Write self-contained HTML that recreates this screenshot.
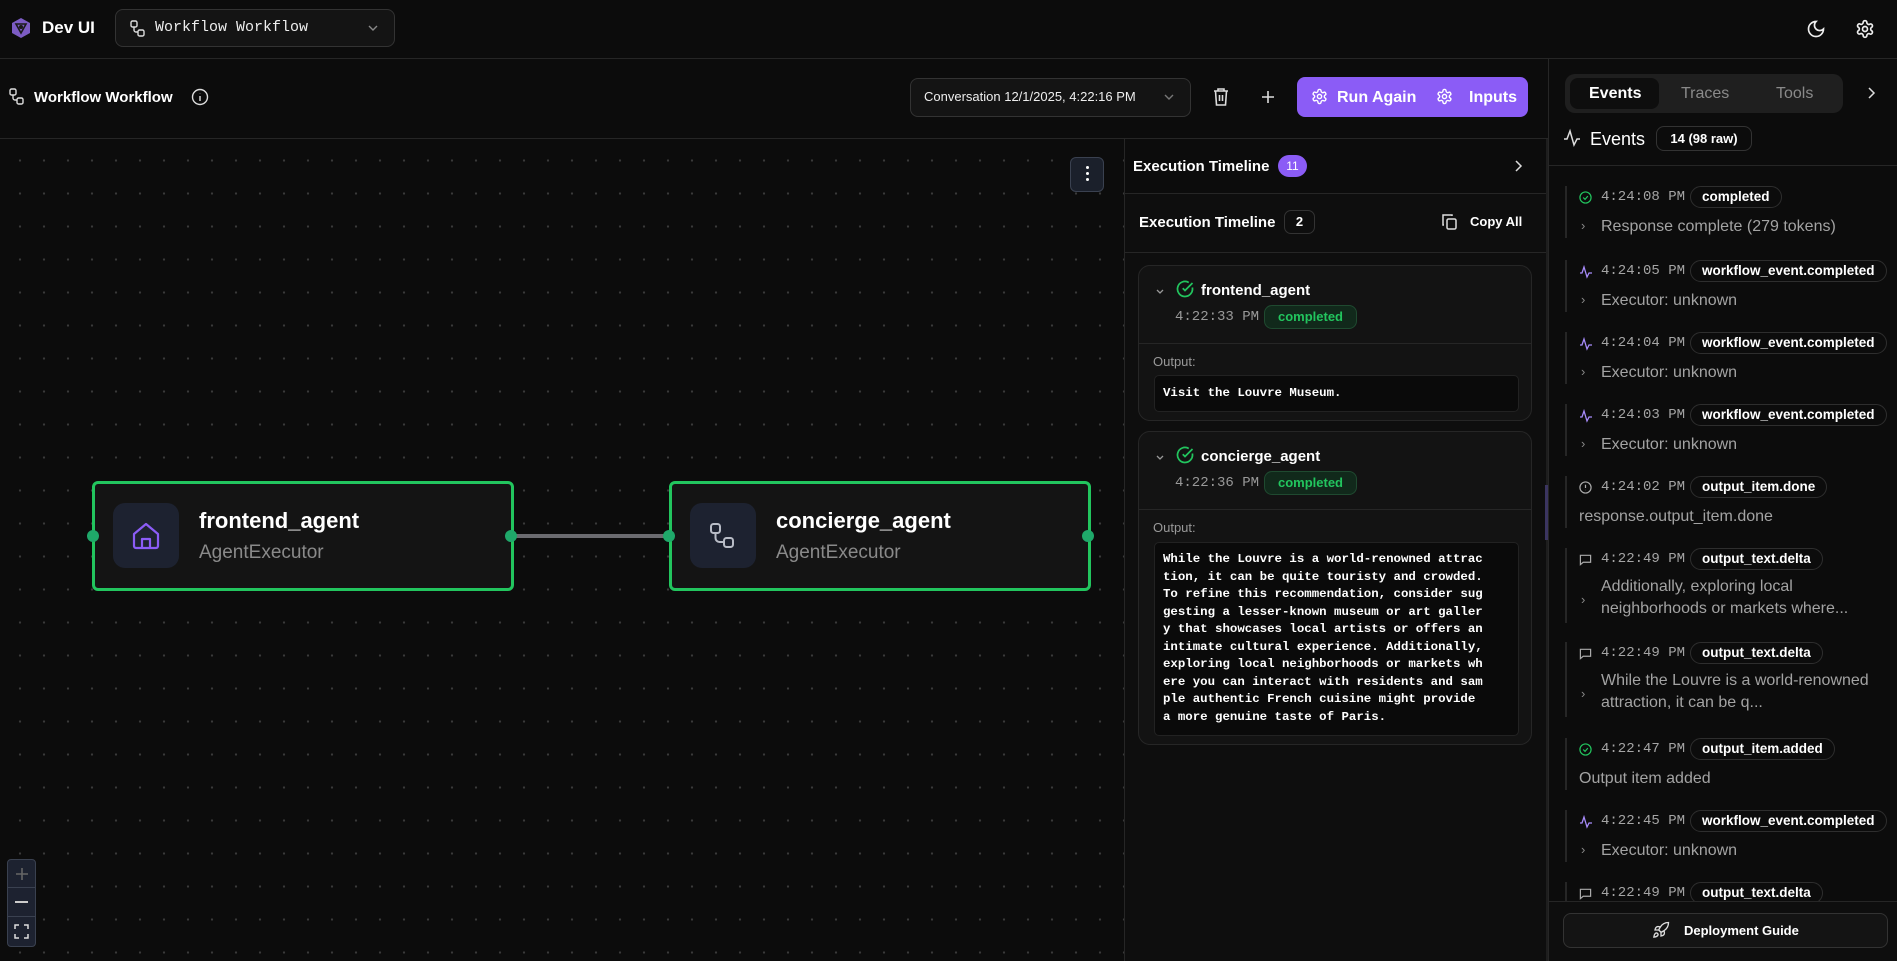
<!DOCTYPE html>
<html><head><meta charset="utf-8">
<style>
*{box-sizing:border-box;margin:0;padding:0}
body{width:1897px;height:961px;background:#0c0c0c;color:#fff;font-family:"Liberation Sans",sans-serif;position:relative;overflow:hidden}
.a{position:absolute}
.mono{font-family:"Liberation Mono",monospace}
svg{display:block}
.ev{position:absolute;left:1565px;width:320px;border-left:2px solid #262626}
.ev .row{position:absolute;left:0;top:0;height:24px;width:320px}
.ev .ic{position:absolute;left:12px;top:5px}
.ev .t{position:absolute;left:34px;top:3px;font-family:"Liberation Mono",monospace;font-size:14px;color:#a5a5a5}
.ev .b{position:absolute;left:123px;top:0;height:22px;border:1px solid #2e2e2e;border-radius:11px;padding:0 11px;font-size:13.5px;font-weight:bold;line-height:20px;color:#fff;white-space:nowrap}
.ev .d{position:absolute;left:34px;top:28px;font-size:16px;color:#a3a3a3;line-height:26px;white-space:nowrap}
.ev .d0{left:12px}
.ev .ch{position:absolute;left:14px;top:32px;color:#888;font-size:13px}
.card{position:absolute;left:1138px;width:394px;border:1px solid #262626;border-radius:12px;background:#131313;overflow:hidden}
</style></head><body>
<div class="a" style="left:0;top:139px;width:1124px;height:822px;background-image:radial-gradient(circle,#3a3a3a 1px,transparent 1.3px);background-size:24px 33px;background-position:8px 5px"></div>

<div class="a" style="left:0;top:0;width:1897px;height:59px;border-bottom:1px solid #262626;background:#0c0c0c"></div>
<svg class="a" style="left:11px;top:17px" width="20" height="22" viewBox="0 0 20 22"><path d="M10 1L19 6V16L10 21L1 16V6Z" fill="#7c5cc4"/><path d="M5 7H15L10 16Z" fill="none" stroke="#1a1a1a" stroke-width="1.6"/><circle cx="10" cy="10" r="2" fill="#1a1a1a"/></svg>
<div class="a" style="left:42px;top:18px;font-size:17px;font-weight:bold">Dev UI</div>
<div class="a" style="left:115px;top:9px;width:280px;height:38px;border:1px solid #333;border-radius:8px;background:#141414"></div>
<svg class="a" style="left:130px;top:20px" width="16" height="18" viewBox="0 0 16 18" fill="none" stroke="#ddd" stroke-width="1.4"><rect x="1" y="1" width="6" height="6" rx="1.5"/><rect x="8" y="10" width="6" height="6" rx="1.5"/><path d="M4 7v3a2 2 0 0 0 2 2h2"/></svg>
<div class="a mono" style="left:155px;top:19px;font-size:15px;color:#eee">Workflow Workflow</div>
<svg class="a" style="left:367px;top:24px" width="12" height="8" viewBox="0 0 12 8"><path d="M2 2l4 4 4-4" stroke="#888" stroke-width="1.4" fill="none"/></svg>
<svg class="a" style="left:1806px;top:19px" width="20" height="20" viewBox="0 0 24 24" fill="none" stroke="#eee" stroke-width="2"><path d="M12 3a6 6 0 0 0 9 9 9 9 0 1 1-9-9z"/></svg>
<svg class="a" style="left:1855px;top:19px" width="20" height="20" viewBox="0 0 24 24" fill="none" stroke="#eee" stroke-width="2"><path d="M12.2 2h-.4a2 2 0 0 0-2 2v.2a2 2 0 0 1-1 1.7l-.4.3a2 2 0 0 1-2 0l-.2-.1a2 2 0 0 0-2.7.7l-.2.4a2 2 0 0 0 .7 2.7l.2.1a2 2 0 0 1 1 1.700v.5a2 2 0 0 1-1 1.7l-.2.1a2 2 0 0 0-.7 2.7l.2.4a2 2 0 0 0 2.7.7l.2-.1a2 2 0 0 1 2 0l.4.3a2 2 0 0 1 1 1.7V20a2 2 0 0 0 2 2h.4a2 2 0 0 0 2-2v-.2a2 2 0 0 1 1-1.7l.4-.3a2 2 0 0 1 2 0l.2.1a2 2 0 0 0 2.7-.7l.2-.4a2 2 0 0 0-.7-2.7l-.2-.1a2 2 0 0 1-1-1.7v-.5a2 2 0 0 1 1-1.7l.2-.1a2 2 0 0 0 .7-2.7l-.2-.4a2 2 0 0 0-2.7-.7l-.2.1a2 2 0 0 1-2 0l-.4-.3a2 2 0 0 1-1-1.7V4a2 2 0 0 0-2-2z"/><circle cx="12" cy="12" r="3"/></svg>

<div class="a" style="left:0;top:59px;width:1548px;height:80px;border-bottom:1px solid #262626"></div>
<svg class="a" style="left:9px;top:88px" width="16" height="18" viewBox="0 0 16 18" fill="none" stroke="#ddd" stroke-width="1.4"><rect x="1" y="1" width="6" height="6" rx="1.5"/><rect x="8" y="10" width="6" height="6" rx="1.5"/><path d="M4 7v3a2 2 0 0 0 2 2h2"/></svg>
<div class="a" style="left:34px;top:89px;font-size:15px;font-weight:bold">Workflow Workflow</div>
<svg class="a" style="left:191px;top:88px" width="18" height="18" viewBox="0 0 18 18" fill="none" stroke="#ddd" stroke-width="1.4"><circle cx="9" cy="9" r="7.5"/><path d="M9 8v5M9 5.2v.3"/></svg>
<div class="a" style="left:910px;top:78px;width:281px;height:39px;border:1px solid #333;border-radius:8px;background:#141414"></div>
<div class="a" style="left:924px;top:89px;font-size:13px;color:#eee">Conversation 12/1/2025, 4:22:16 PM</div>
<svg class="a" style="left:1163px;top:93px" width="12" height="8" viewBox="0 0 12 8"><path d="M2 2l4 4 4-4" stroke="#777" stroke-width="1.4" fill="none"/></svg>
<svg class="a" style="left:1212px;top:87px" width="18" height="20" viewBox="0 0 18 20" fill="none" stroke="#ddd" stroke-width="1.6"><path d="M2 4h14M6 4V2h6v2M3.5 4l1 14h9l1-14M7.5 8v6M10.5 8v6"/></svg>
<svg class="a" style="left:1260px;top:89px" width="16" height="16" viewBox="0 0 16 16" stroke="#ddd" stroke-width="1.6"><path d="M8 2v12M2 8h12"/></svg>
<div class="a" style="left:1297px;top:77px;width:231px;height:40px;border-radius:8px;background:#8b5cf6"></div>
<svg class="a" style="left:1311px;top:88px" width="17" height="17" viewBox="0 0 24 24" fill="none" stroke="#fff" stroke-width="2"><path d="M12.2 2h-.4a2 2 0 0 0-2 2v.2a2 2 0 0 1-1 1.7l-.4.3a2 2 0 0 1-2 0l-.2-.1a2 2 0 0 0-2.7.7l-.2.4a2 2 0 0 0 .7 2.7l.2.1a2 2 0 0 1 1 1.7v.5a2 2 0 0 1-1 1.7l-.2.1a2 2 0 0 0-.7 2.7l.2.4a2 2 0 0 0 2.7.7l.2-.1a2 2 0 0 1 2 0l.4.3a2 2 0 0 1 1 1.7V20a2 2 0 0 0 2 2h.4a2 2 0 0 0 2-2v-.2a2 2 0 0 1 1-1.7l.4-.3a2 2 0 0 1 2 0l.2.1a2 2 0 0 0 2.7-.7l.2-.4a2 2 0 0 0-.7-2.7l-.2-.1a2 2 0 0 1-1-1.7v-.5a2 2 0 0 1 1-1.7l.2-.1a2 2 0 0 0 .7-2.7l-.2-.4a2 2 0 0 0-2.7-.7l-.2.1a2 2 0 0 1-2 0l-.4-.3a2 2 0 0 1-1-1.7V4a2 2 0 0 0-2-2z"/><circle cx="12" cy="12" r="3"/></svg>
<div class="a" style="left:1337px;top:89px;font-size:16px;font-weight:bold">Run Again</div>
<svg class="a" style="left:1436px;top:88px" width="17" height="17" viewBox="0 0 24 24" fill="none" stroke="#fff" stroke-width="2"><path d="M12.2 2h-.4a2 2 0 0 0-2 2v.2a2 2 0 0 1-1 1.7l-.4.3a2 2 0 0 1-2 0l-.2-.1a2 2 0 0 0-2.7.7l-.2.4a2 2 0 0 0 .7 2.7l.2.1a2 2 0 0 1 1 1.7v.5a2 2 0 0 1-1 1.7l-.2.1a2 2 0 0 0-.7 2.7l.2.4a2 2 0 0 0 2.7.7l.2-.1a2 2 0 0 1 2 0l.4.3a2 2 0 0 1 1 1.7V20a2 2 0 0 0 2 2h.4a2 2 0 0 0 2-2v-.2a2 2 0 0 1 1-1.7l.4-.3a2 2 0 0 1 2 0l.2.1a2 2 0 0 0 2.7-.7l.2-.4a2 2 0 0 0-.7-2.7l-.2-.1a2 2 0 0 1-1-1.7v-.5a2 2 0 0 1 1-1.7l.2-.1a2 2 0 0 0 .7-2.7l-.2-.4a2 2 0 0 0-2.7-.7l-.2.1a2 2 0 0 1-2 0l-.4-.3a2 2 0 0 1-1-1.7V4a2 2 0 0 0-2-2z"/><circle cx="12" cy="12" r="3"/></svg>
<div class="a" style="left:1469px;top:89px;font-size:16px;font-weight:bold">Inputs</div>

<div class="a" style="left:1070px;top:157px;width:34px;height:35px;border:1px solid #3a4150;border-radius:6px;background:#1b202b"></div>
<div class="a" style="left:1086px;top:166px;width:3px;height:3px;background:#fff;border-radius:2px;box-shadow:0 6px 0 #fff,0 12px 0 #fff"></div>
<div class="a" style="left:513px;top:534px;width:156px;height:4px;background:#6b6b70"></div>
<div class="a" style="left:92px;top:481px;width:422px;height:110px;border:3px solid #22c55e;border-radius:6px;background:#141414"></div>
<div class="a" style="left:113px;top:503px;width:66px;height:65px;border-radius:12px;background:#1d2230"></div>
<svg class="a" style="left:131px;top:521px" width="30" height="30" viewBox="0 0 30 30" fill="none" stroke="#8b5cf6" stroke-width="2.2" stroke-linejoin="round"><path d="M3 13L15 3l12 10v12a2 2 0 0 1-2 2H5a2 2 0 0 1-2-2z"/><path d="M11 27v-9h8v9"/></svg>
<div class="a" style="left:199px;top:508px;font-size:22px;font-weight:bold">frontend_agent</div>
<div class="a" style="left:199px;top:542px;font-size:19px;color:#8a8a8a">AgentExecutor</div>
<div class="a" style="left:669px;top:481px;width:422px;height:110px;border:3px solid #22c55e;border-radius:6px;background:#141414"></div>
<div class="a" style="left:690px;top:503px;width:66px;height:65px;border-radius:12px;background:#1d2230"></div>
<svg class="a" style="left:708px;top:521px" width="30" height="30" viewBox="0 0 30 30" fill="none" stroke="#b8bcc6" stroke-width="2"><rect x="3" y="3" width="9" height="9" rx="2.5"/><rect x="16" y="17" width="9" height="9" rx="2.5"/><path d="M7.5 12v5a4 4 0 0 0 4 4H16"/></svg>
<div class="a" style="left:776px;top:508px;font-size:22px;font-weight:bold">concierge_agent</div>
<div class="a" style="left:776px;top:542px;font-size:19px;color:#8a8a8a">AgentExecutor</div>
<div class="a" style="left:87px;top:530px;width:12px;height:12px;border-radius:6px;background:#1fa86a"></div>
<div class="a" style="left:505px;top:530px;width:12px;height:12px;border-radius:6px;background:#1fa86a"></div>
<div class="a" style="left:663px;top:530px;width:12px;height:12px;border-radius:6px;background:#1fa86a"></div>
<div class="a" style="left:1082px;top:530px;width:12px;height:12px;border-radius:6px;background:#1fa86a"></div>
<div class="a" style="left:7px;top:859px;width:29px;height:88px;border:1px solid #3a4150;border-radius:4px;background:#1d2230"></div>
<div class="a" style="left:8px;top:887px;width:27px;height:1px;background:#3a4150"></div>
<div class="a" style="left:8px;top:916px;width:27px;height:1px;background:#3a4150"></div>
<svg class="a" style="left:14px;top:866px" width="16" height="16" stroke="#666" stroke-width="1.6"><path d="M8 2v12M2 8h12"/></svg>
<div class="a" style="left:15px;top:901px;width:13px;height:2px;background:#ccc"></div>
<svg class="a" style="left:14px;top:924px" width="15" height="15" fill="none" stroke="#ddd" stroke-width="1.5"><path d="M1 5V1h4M10 1h4v4M14 10v4h-4M5 14H1v-4"/></svg>

<div class="a" style="left:1124px;top:139px;width:424px;height:822px;border-left:1px solid #262626;border-right:2px solid #1e1e1e;background:#0c0c0c"></div>
<div class="a" style="left:1133px;top:158px;font-size:15px;font-weight:bold">Execution Timeline</div>
<div class="a" style="left:1278px;top:155px;width:29px;height:22px;border-radius:11px;background:#8b5cf6;font-size:12px;text-align:center;line-height:22px">11</div>
<svg class="a" style="left:1514px;top:159px" width="10" height="14"><path d="M2 2l5 5-5 5" stroke="#ddd" stroke-width="1.5" fill="none"/></svg>
<div class="a" style="left:1125px;top:193px;width:421px;height:768px;border-top:1px solid #262626;background:#0e0e0e"></div>
<div class="a" style="left:1125px;top:252px;width:421px;height:1px;background:#262626"></div>
<div class="a" style="left:1139px;top:214px;font-size:15px;font-weight:bold">Execution Timeline</div>
<div class="a" style="left:1284px;top:210px;width:31px;height:24px;border:1px solid #333;border-radius:7px;font-size:13px;font-weight:bold;text-align:center;line-height:22px">2</div>
<svg class="a" style="left:1441px;top:213px" width="17" height="18" viewBox="0 0 17 18" fill="none" stroke="#ddd" stroke-width="1.5"><rect x="6" y="6" width="9" height="10" rx="1.5"/><path d="M3 12H2V2h9v1"/></svg>
<div class="a" style="left:1470px;top:214px;font-size:13px;font-weight:bold">Copy All</div>
<div class="a" style="left:1545px;top:485px;width:3px;height:55px;background:#3b3560"></div>

<div class="card" style="top:265px;height:156px">
  <svg class="a" style="left:16px;top:22px" width="10" height="8"><path d="M2 2l3 3 3-3" stroke="#999" stroke-width="1.3" fill="none"/></svg>
  <svg class="a" style="left:37px;top:14px" width="18" height="18" viewBox="0 0 24 24" fill="none" stroke="#22c55e" stroke-width="2.3"><path d="M21.8 10A10 10 0 1 1 17 3.3"/><path d="M9 11l3 3L22 4"/></svg>
  <div class="a" style="left:62px;top:16px;font-size:15px;font-weight:bold">frontend_agent</div>
  <div class="a mono" style="left:36px;top:43px;font-size:14px;color:#999">4:22:33 PM</div>
  <div class="a" style="left:125px;top:39px;width:93px;height:24px;border:1px solid #1f4a30;border-radius:8px;background:#11291b;color:#22c55e;font-size:13px;font-weight:bold;text-align:center;line-height:22px">completed</div>
  <div class="a" style="left:0;top:77px;width:394px;height:1px;background:#262626"></div>
  <div class="a" style="left:14px;top:88px;font-size:13px;color:#999">Output:</div>
  <div class="a mono" style="left:15px;top:109px;width:365px;height:37px;border:1px solid #222;border-radius:5px;background:#0a0a0a;font-size:12.4px;font-weight:bold;padding:10px 8px;color:#fff">Visit the Louvre Museum.</div>
</div>
<div class="card" style="top:431px;height:314px">
  <svg class="a" style="left:16px;top:22px" width="10" height="8"><path d="M2 2l3 3 3-3" stroke="#999" stroke-width="1.3" fill="none"/></svg>
  <svg class="a" style="left:37px;top:14px" width="18" height="18" viewBox="0 0 24 24" fill="none" stroke="#22c55e" stroke-width="2.3"><path d="M21.8 10A10 10 0 1 1 17 3.3"/><path d="M9 11l3 3L22 4"/></svg>
  <div class="a" style="left:62px;top:16px;font-size:15px;font-weight:bold">concierge_agent</div>
  <div class="a mono" style="left:36px;top:43px;font-size:14px;color:#999">4:22:36 PM</div>
  <div class="a" style="left:125px;top:39px;width:93px;height:24px;border:1px solid #1f4a30;border-radius:8px;background:#11291b;color:#22c55e;font-size:13px;font-weight:bold;text-align:center;line-height:22px">completed</div>
  <div class="a" style="left:0;top:77px;width:394px;height:1px;background:#262626"></div>
  <div class="a" style="left:14px;top:88px;font-size:13px;color:#999">Output:</div>
  <div class="a mono" style="left:15px;top:110px;width:365px;height:194px;border:1px solid #222;border-radius:5px;background:#0a0a0a;font-size:12.4px;font-weight:bold;line-height:17.5px;padding:8px 8px;color:#fff;white-space:pre">While the Louvre is a world-renowned attrac
tion, it can be quite touristy and crowded.
To refine this recommendation, consider sug
gesting a lesser-known museum or art galler
y that showcases local artists or offers an
intimate cultural experience. Additionally,
exploring local neighborhoods or markets wh
ere you can interact with residents and sam
ple authentic French cuisine might provide
a more genuine taste of Paris.</div>
</div>

<div class="a" style="left:1548px;top:59px;width:349px;height:902px;border-left:1px solid #262626;background:#0c0c0c"></div>
<div class="a" style="left:1565px;top:74px;width:278px;height:39px;border-radius:10px;background:#1f1f1f"></div>
<div class="a" style="left:1570px;top:78px;width:89px;height:31px;border-radius:8px;background:#0e0e0e"></div>
<div class="a" style="left:1589px;top:85px;font-size:16px;font-weight:bold">Events</div>
<div class="a" style="left:1681px;top:85px;font-size:16px;color:#8a8a8a">Traces</div>
<div class="a" style="left:1776px;top:85px;font-size:16px;color:#8a8a8a">Tools</div>
<svg class="a" style="left:1867px;top:86px" width="10" height="14"><path d="M2 2l5 5-5 5" stroke="#ddd" stroke-width="1.5" fill="none"/></svg>
<svg class="a" style="left:1563px;top:128px" width="18" height="20" viewBox="0 0 18 20" fill="none" stroke="#ddd" stroke-width="1.5"><path d="M1 11h3l3-8 4 14 3-6h3"/></svg>
<div class="a" style="left:1590px;top:129px;font-size:18px">Events</div>
<div class="a" style="left:1656px;top:126px;width:96px;height:25px;border:1px solid #333;border-radius:8px;font-size:13px;font-weight:bold;text-align:center;line-height:23px">14 (98 raw)</div>
<div class="a" style="left:1548px;top:165px;width:349px;height:1px;background:#262626"></div>

<div class="ev" style="top:186px;height:52px"><div class="row"><svg class="ic" width="13" height="13" viewBox="0 0 14 14" fill="none" stroke="#22c55e" stroke-width="1.3"><circle cx="7" cy="7" r="6"/><path d="M4.5 7l2 2 3-3.5"/></svg><span class="t">4:24:08 PM</span><span class="b">completed</span></div><span class="ch">›</span><div class="d">Response complete (279 tokens)</div></div>
<div class="ev" style="top:260px;height:52px"><div class="row"><svg class="ic" width="14" height="14" viewBox="0 0 14 14" fill="none" stroke="#a78bfa" stroke-width="1.3"><path d="M1 8h2l2-6 3 10 2-4h3"/></svg><span class="t">4:24:05 PM</span><span class="b">workflow_event.completed</span></div><span class="ch">›</span><div class="d">Executor: unknown</div></div>
<div class="ev" style="top:332px;height:52px"><div class="row"><svg class="ic" width="14" height="14" viewBox="0 0 14 14" fill="none" stroke="#a78bfa" stroke-width="1.3"><path d="M1 8h2l2-6 3 10 2-4h3"/></svg><span class="t">4:24:04 PM</span><span class="b">workflow_event.completed</span></div><span class="ch">›</span><div class="d">Executor: unknown</div></div>
<div class="ev" style="top:404px;height:52px"><div class="row"><svg class="ic" width="14" height="14" viewBox="0 0 14 14" fill="none" stroke="#a78bfa" stroke-width="1.3"><path d="M1 8h2l2-6 3 10 2-4h3"/></svg><span class="t">4:24:03 PM</span><span class="b">workflow_event.completed</span></div><span class="ch">›</span><div class="d">Executor: unknown</div></div>
<div class="ev" style="top:476px;height:52px"><div class="row"><svg class="ic" width="13" height="13" viewBox="0 0 14 14" fill="none" stroke="#aaa" stroke-width="1.3"><circle cx="7" cy="7" r="6"/><path d="M7 4v3.5M7 9.5v.3"/></svg><span class="t">4:24:02 PM</span><span class="b">output_item.done</span></div><div class="d d0">response.output_item.done</div></div>
<div class="ev" style="top:548px;height:75px"><div class="row"><svg class="ic" width="13" height="13" viewBox="0 0 14 14" fill="none" stroke="#aaa" stroke-width="1.3"><path d="M1.5 2.5h11v7.5h-8l-3 2.5z"/></svg><span class="t">4:22:49 PM</span><span class="b">output_text.delta</span></div><span class="ch" style="top:44px">›</span><div class="d" style="line-height:22px">Additionally, exploring local<br>neighborhoods or markets where...</div></div>
<div class="ev" style="top:642px;height:75px"><div class="row"><svg class="ic" width="13" height="13" viewBox="0 0 14 14" fill="none" stroke="#aaa" stroke-width="1.3"><path d="M1.5 2.5h11v7.5h-8l-3 2.5z"/></svg><span class="t">4:22:49 PM</span><span class="b">output_text.delta</span></div><span class="ch" style="top:44px">›</span><div class="d" style="line-height:22px">While the Louvre is a world-renowned<br>attraction, it can be q...</div></div>
<div class="ev" style="top:738px;height:52px"><div class="row"><svg class="ic" width="13" height="13" viewBox="0 0 14 14" fill="none" stroke="#22c55e" stroke-width="1.3"><circle cx="7" cy="7" r="6"/><path d="M4.5 7l2 2 3-3.5"/></svg><span class="t">4:22:47 PM</span><span class="b">output_item.added</span></div><div class="d d0">Output item added</div></div>
<div class="ev" style="top:810px;height:52px"><div class="row"><svg class="ic" width="14" height="14" viewBox="0 0 14 14" fill="none" stroke="#a78bfa" stroke-width="1.3"><path d="M1 8h2l2-6 3 10 2-4h3"/></svg><span class="t">4:22:45 PM</span><span class="b">workflow_event.completed</span></div><span class="ch">›</span><div class="d">Executor: unknown</div></div>
<div class="ev" style="top:882px;height:30px"><div class="row"><svg class="ic" width="13" height="13" viewBox="0 0 14 14" fill="none" stroke="#aaa" stroke-width="1.3"><path d="M1.5 2.5h11v7.5h-8l-3 2.5z"/></svg><span class="t">4:22:49 PM</span><span class="b">output_text.delta</span></div></div>

<div class="a" style="left:1549px;top:901px;width:348px;height:60px;border-top:1px solid #262626;background:#0e0e0e"></div>
<div class="a" style="left:1563px;top:913px;width:325px;height:35px;border:1px solid #333;border-radius:8px;background:#141414"></div>
<svg class="a" style="left:1652px;top:921px" width="18" height="18" viewBox="0 0 24 24" fill="none" stroke="#ddd" stroke-width="1.8"><path d="M4.5 16.5c-1.5 1.3-2 5-2 5s3.7-.5 5-2c.7-.8.7-2.1-.1-2.9a2.2 2.2 0 0 0-2.9-.1zM12 15l-3-3a22 22 0 0 1 2-3.9A12.9 12.9 0 0 1 22 2c0 2.7-.8 7.5-6 11a22.4 22.4 0 0 1-4 2z"/><path d="M9 12H4s.6-3 2-4c1.6-1.1 5 0 5 0M12 15v5s3-.6 4-2c1.1-1.6 0-5 0-5"/></svg>
<div class="a" style="left:1684px;top:923px;font-size:13px;font-weight:bold">Deployment Guide</div>
</body></html>
